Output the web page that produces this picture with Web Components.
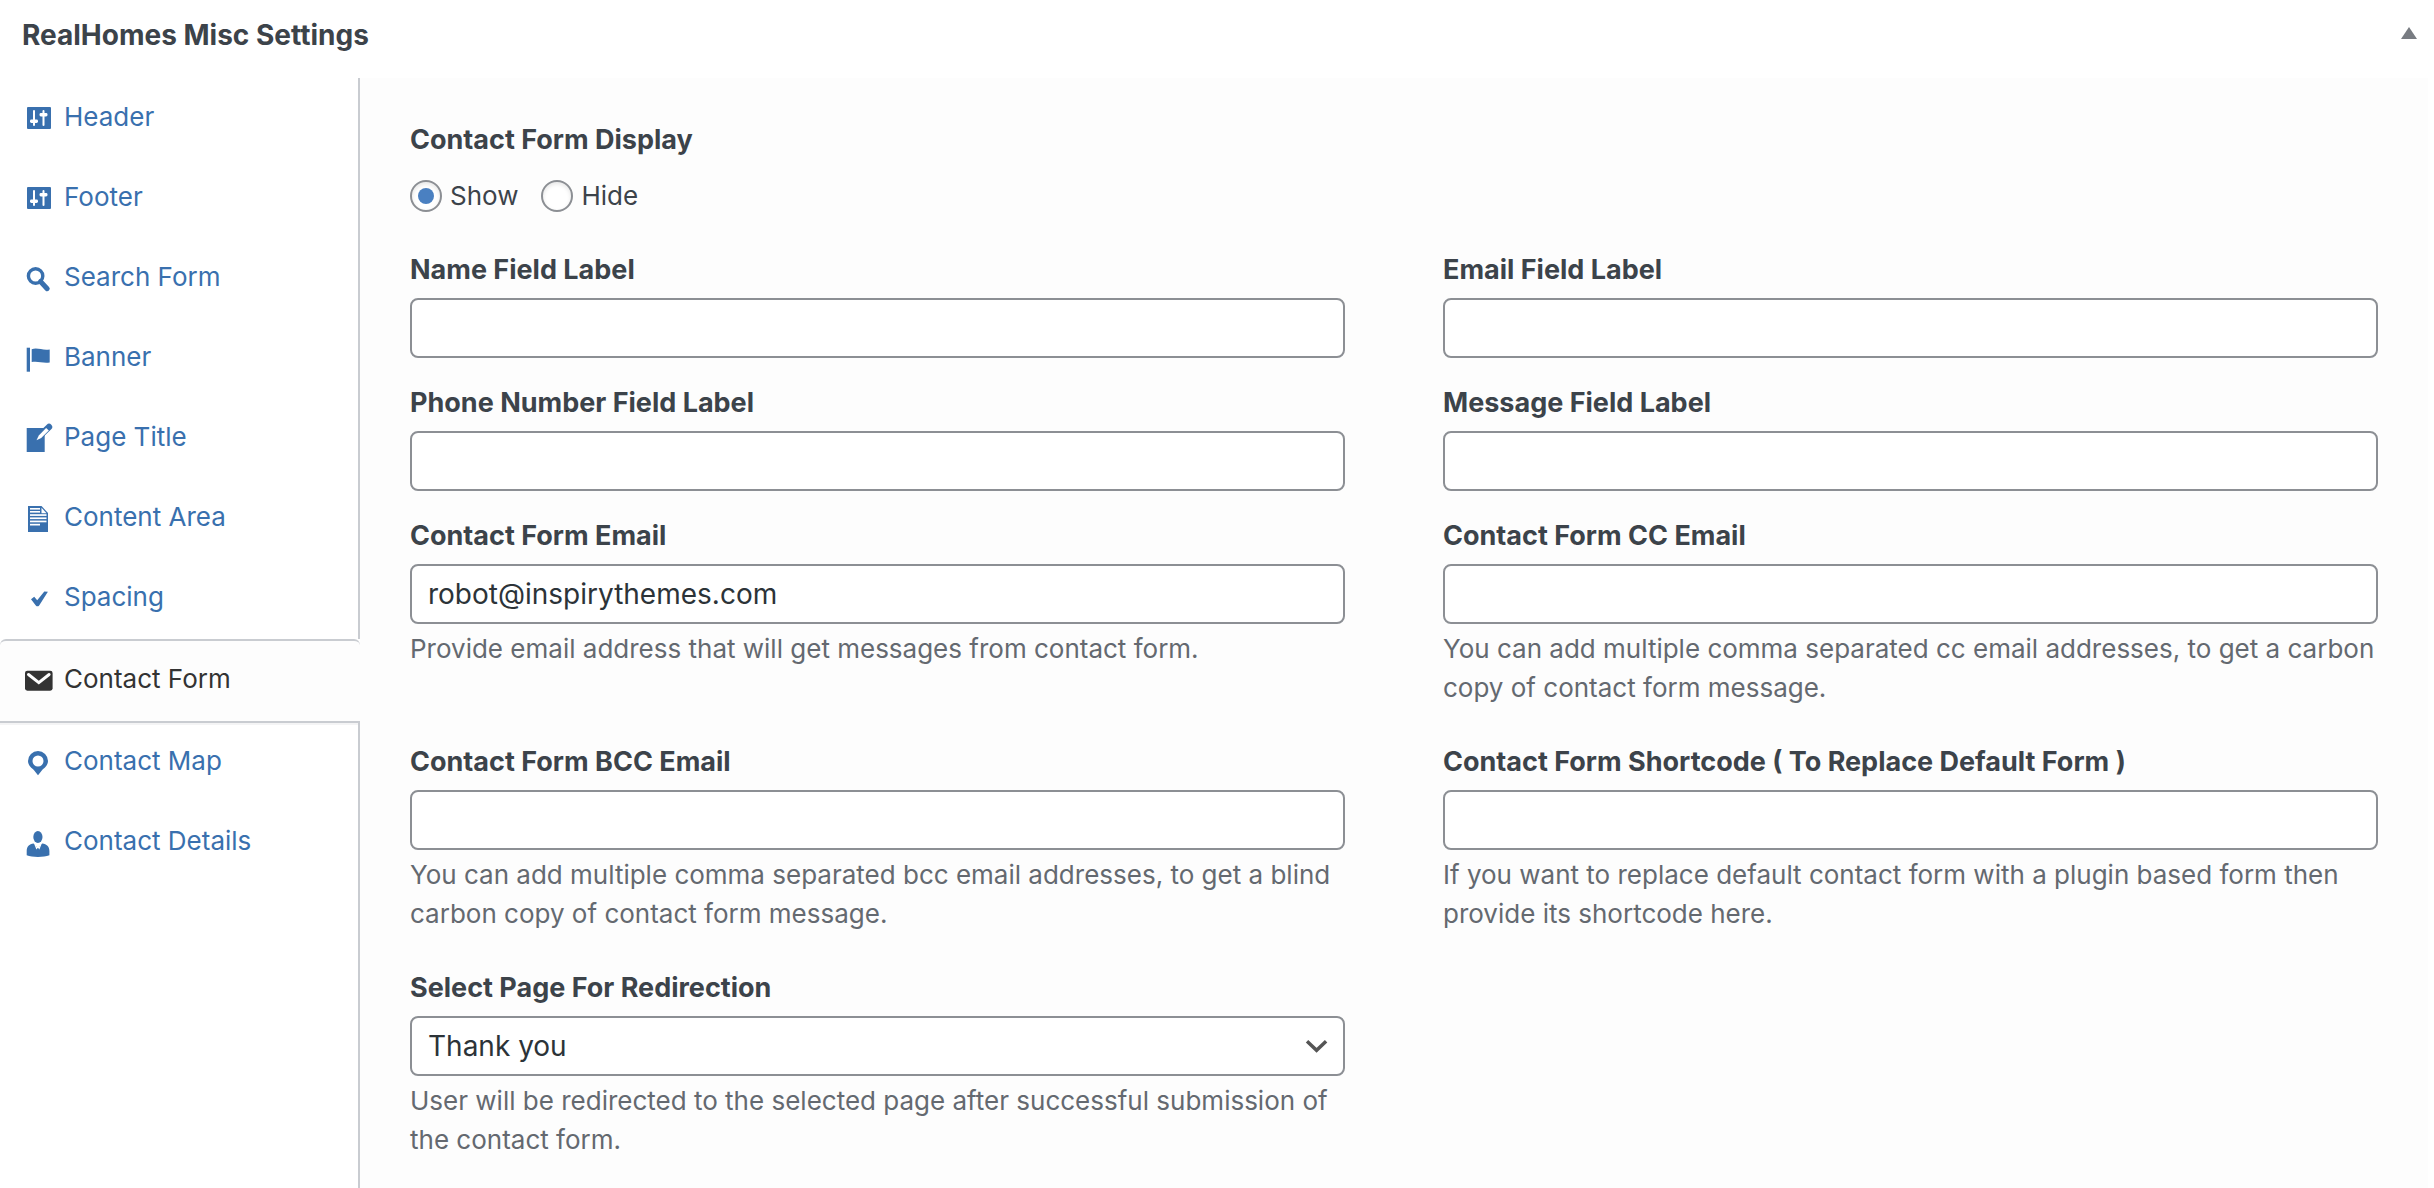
<!DOCTYPE html>
<html lang="en">
<head>
<meta charset="utf-8">
<meta name="viewport" content="width=device-width, initial-scale=1">
<title>RealHomes Misc Settings</title>
<style>
  html, body { margin: 0; background: #fff; }
  body {
    font-family: Inter, "Liberation Sans", sans-serif;
    font-size: 26px;
    color: #3c434a;
    --link: #3970ae;
    --line: #c9ccd1;
    --field-line: #8c8f94;
    --panel: #fdfdfd;
    --muted: #646970;
    --ink: #2c3338;
  }
</style>
</head>
<body>

<settings-box heading="RealHomes Misc Settings">
  <settings-tabs slot="tabs">
    <settings-tab icon="sliders" href="#header">Header</settings-tab>
    <settings-tab icon="sliders" href="#footer">Footer</settings-tab>
    <settings-tab icon="search" href="#search-form">Search Form</settings-tab>
    <settings-tab icon="flag" href="#banner">Banner</settings-tab>
    <settings-tab icon="edit" href="#page-title">Page Title</settings-tab>
    <settings-tab icon="document" href="#content-area">Content Area</settings-tab>
    <settings-tab icon="check" href="#spacing">Spacing</settings-tab>
    <settings-tab icon="mail" href="#contact-form" active>Contact Form</settings-tab>
    <settings-tab icon="pin" href="#contact-map">Contact Map</settings-tab>
    <settings-tab icon="person" href="#contact-details">Contact Details</settings-tab>
  </settings-tabs>

  <settings-form>
    <radio-field wide label="Contact Form Display" name="display" options="Show,Hide" value="Show"></radio-field>
    <text-field label="Name Field Label"></text-field>
    <text-field label="Email Field Label"></text-field>
    <text-field label="Phone Number Field Label"></text-field>
    <text-field label="Message Field Label"></text-field>
    <text-field label="Contact Form Email" value="robot@inspirythemes.com">Provide email address that will get messages from contact form.</text-field>
    <text-field label="Contact Form CC Email">You can add multiple comma separated cc email addresses, to get a carbon copy of contact form message.</text-field>
    <text-field label="Contact Form BCC Email">You can add multiple comma separated bcc email addresses, to get a blind carbon copy of contact form message.</text-field>
    <text-field label="Contact Form Shortcode ( To Replace Default Form )">If you want to replace default contact form with a plugin based form then provide its shortcode here.</text-field>
    <select-field label="Select Page For Redirection" options="Thank you">User will be redirected to the selected page after successful submission of the contact form.</select-field>
  </settings-form>
</settings-box>

<script>
const ICONS = {
  sliders: `<path d="M4 5h22a1 1 0 0 1 1 1v20a1 1 0 0 1-1 1H4a1 1 0 0 1-1-1V6a1 1 0 0 1 1-1z"/>
    <g fill="#fff"><rect x="9" y="8" width="2" height="16" rx="1"/><rect x="6" y="17.5" width="8" height="3.4" rx="1.4"/>
    <rect x="18.5" y="8" width="2" height="16" rx="1"/><rect x="15.5" y="11" width="8" height="3.4" rx="1.4"/></g>`,
  search: `<circle cx="11.6" cy="14" r="7.2" fill="none" stroke="currentColor" stroke-width="3.4"/>
    <path d="M16.5 19.5l6.700 7.200" fill="none" stroke="currentColor" stroke-width="5" stroke-linecap="round"/>`,
  flag: `<path d="M2.700 5.700H6v24H2.700z"/><path d="M7.700 7.200c6-2 11 1.600 18 .2v13c-7 1.200-12-1.800-18-.3z"/>`,
  edit: `<path d="M2.700 6h18v24h-18z"/>
    <path d="M18 11.800L25 5" fill="none" stroke="currentColor" stroke-width="6.400" stroke-linecap="round"/>
    <path d="M12.500 18.300l2.300-4.800 7.300-7.500 2.700 2.600-7.600 7.400z" fill="#fff"/>`,
  document: `<path d="M4 4h13.500l6.500 7v19H4z"/><g fill="#fff"><rect x="6" y="6" width="10" height="1.600"/><rect x="6" y="9" width="10" height="1.600"/>
    <path d="M17.500 5.700v5.500h5z"/><rect x="6" y="12.200" width="16.500" height="1.700"/><rect x="6" y="15.400" width="16.500" height="1.700"/><rect x="6" y="18.600" width="16.500" height="1.700"/><rect x="6" y="21.800" width="10" height="1.700"/></g>`,
  check: `<path d="M7 17.200l3.200-2.400 3 3.400L20.300 9.500l3.600.3L15 23.700c-.8.800-2.300.8-3 0z"/>`,
  mail: `<rect x="1" y="6.700" width="27.600" height="20" rx="2.400"/><path d="M4.500 10.500l10.300 8.200 10.300-8.200" fill="none" stroke="#fdfdfd" stroke-width="3" stroke-linecap="round"/>`,
  pin: `<path fill-rule="evenodd" d="M14 5a10 10 0 0 1 10 10c0 4.500-3.600 6.800-6 9.200L14 29.300 10 24.200C7.600 21.800 4 19.500 4 15A10 10 0 0 1 14 5zm0 4.500a5.500 5.500 0 1 0 0 11 5.500 5.500 0 0 0 0-11z"/>`,
  person: `<ellipse cx="13.900" cy="11" rx="4.600" ry="5.900"/><path d="M9.600 17.600l4.300 4.400 4.300-4.400c4.500.6 7.200 3.200 7.200 7.400v4.300c-6 2.200-17 2.200-22.700 0V25c0-4.200 2.500-6.800 6.900-7.400z"/>
    <path d="M11 18.200l1.600 4 1.300-1.700 1.300 1.700 1.600-4" fill="none" stroke="#fff" stroke-width="1.300"/>`,
  chevron: `<path d="M3.500 9.500l11 10.500 11-10.500" fill="none" stroke="#555" stroke-width="4"/>`,
  up: `<path d="M15 7l8 12H7z"/>`
};

const define = (name, render) => customElements.define(name, class extends HTMLElement {
  connectedCallback() {
    if (this.shadowRoot) return;
    this.attachShadow({ mode: "open" }).innerHTML = render(this);
  }
});

define("ui-icon", el => `
  <style>
    :host { display: block; flex: none; width: 30px; height: 30px; }
    svg { display: block; width: 100%; height: 100%; overflow: visible; fill: currentColor; }
  </style>
  <svg viewBox="0 0 30 30" aria-hidden="true">${ICONS[el.getAttribute("name")]}</svg>`);

define("settings-box", el => `
  <style>
    :host { display: flex; flex-direction: column; min-height: 100vh; }
    header { display: flex; align-items: center; justify-content: space-between; height: 78px; padding: 0 10px 8px 22px; box-sizing: border-box; }
    h2 { margin: 0; font-size: 28px; line-height: 40px; font-weight: 700; }
    button { display: flex; padding: 0; border: 0; background: none; color: #787c82; cursor: pointer; }
    main { display: flex; flex: 1; padding-right: 6px; }
  </style>
  <header>
    <h2>${el.getAttribute("heading")}</h2>
    <button type="button" aria-label="Toggle panel"><ui-icon name="up"></ui-icon></button>
  </header>
  <main><slot name="tabs"></slot><slot></slot></main>`);

define("settings-tabs", () => `
  <style>
    :host { display: flex; flex: none; width: 360px; }
    nav { display: flex; flex: 1; flex-direction: column; }
    nav::before, nav::after { content: ""; border-right: 2px solid var(--line); }
    nav::before { height: 1px; }
    nav::after { flex: 1; }
  </style>
  <nav><slot></slot></nav>`);

define("settings-tab", el => `
  <style>
    :host { display: block; border-right: 2px solid var(--line); }
    :host([active]) { border: solid var(--line); border-width: 2px 0; border-radius: 6px 6px 0 0; background: var(--panel); box-shadow: 0 2px 0 #f4f4f5; }
    a { display: flex; align-items: center; gap: 10px; padding: 20px 24px 24px; line-height: 36px; color: var(--link); text-decoration: none; white-space: nowrap; }
    :host([active]) a { color: #333; }
  </style>
  <a href="${el.getAttribute("href")}"><ui-icon name="${el.getAttribute("icon")}"></ui-icon><slot></slot></a>`);

define("settings-form", () => `
  <style>
    :host { display: block; flex: 1; min-width: 0; background: var(--panel); }
    form { display: grid; grid-template-columns: 1fr 1fr; gap: 25px 98px; padding: 42px 50px; }
    ::slotted([wide]) { grid-column: 1 / -1; }
  </style>
  <form><slot></slot></form>`);

const FIELD = `
  :host { display: block; min-width: 0; }
  .label { display: block; margin: 0 0 8px; padding: 0; font-size: 27px; font-weight: 700; line-height: 40px; }
  .control { display: block; box-sizing: border-box; width: 100%; height: 60px; margin: 0; padding: 0 16px;
    border: 2px solid var(--field-line); border-radius: 8px; background: #fff; color: var(--ink);
    font: inherit; font-size: 28px; outline: none; appearance: none; }
  p { margin: 5px 0 10px; line-height: 39px; color: var(--muted); }`;

const note = el => el.textContent.trim() ? `<p><slot></slot></p>` : "";

define("text-field", el => `
  <style>${FIELD}</style>
  <label class="label" for="control">${el.getAttribute("label")}</label>
  <input class="control" id="control" type="text" value="${el.getAttribute("value") || ""}">
  ${note(el)}`);

define("select-field", el => `
  <style>${FIELD}
    .wrap { display: grid; align-items: center; }
    .wrap > * { grid-area: 1 / 1; }
    ui-icon { justify-self: end; width: 26px; height: 26px; margin-right: 15px; pointer-events: none; }
  </style>
  <label class="label" for="control">${el.getAttribute("label")}</label>
  <div class="wrap">
    <select class="control" id="control">${el.getAttribute("options").split(",").map(o => `<option>${o}</option>`).join("")}</select>
    <ui-icon name="chevron"></ui-icon>
  </div>
  ${note(el)}`);

define("radio-field", el => `
  <style>${FIELD}
    fieldset { margin: 0; padding: 0; border: 0; min-width: 0; }
    .options { display: flex; gap: 23px; padding: 8px 0 9px; }
    .options label { display: flex; align-items: center; gap: 8px; line-height: 40px; }
    input { display: grid; place-items: center; width: 32px; height: 32px; margin: 0; box-sizing: border-box; appearance: none;
      border: 2px solid var(--field-line); border-radius: 50%; background: #fff; box-shadow: inset 0 2px 4px rgba(0, 0, 0, .1); }
    input:checked::before { content: ""; width: 16px; height: 16px; border-radius: 50%; background: #4a80c1; }
  </style>
  <fieldset>
    <legend class="label">${el.getAttribute("label")}</legend>
    <div class="options">${el.getAttribute("options").split(",").map(o => `
      <label><input type="radio" name="${el.getAttribute("name")}" value="${o}"${o === el.getAttribute("value") ? " checked" : ""}>${o}</label>`).join("")}
    </div>
  </fieldset>`);
</script>
</body>
</html>
